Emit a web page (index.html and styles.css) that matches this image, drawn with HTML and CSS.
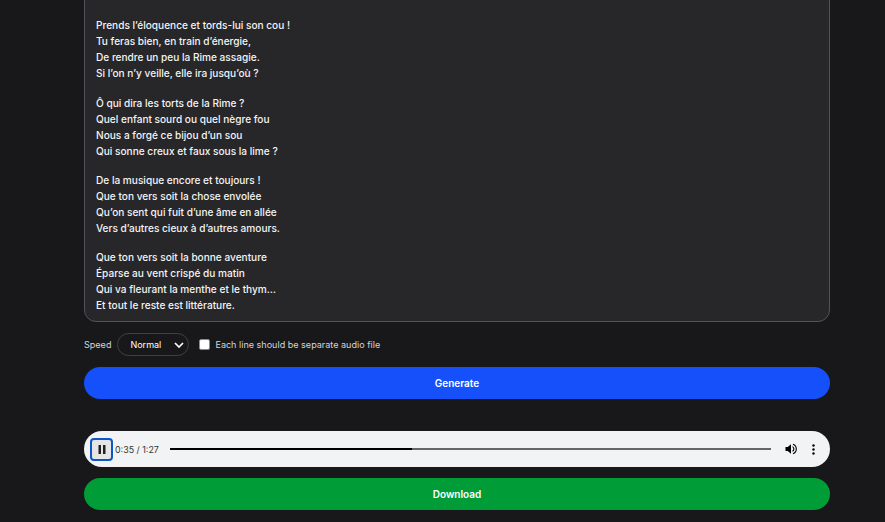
FILE: index.html
```
<!DOCTYPE html>
<html lang="fr">
<head>
<meta charset="utf-8">
<title>Text to speech</title>
<link rel="stylesheet" href="styles.css">
</head>
<body>
<main class="page">
  <div class="poem">
    <p>Fuis du plus loin la Pointe assassine,<br>L’Esprit cruel et le Rire impur,<br>Qui font pleurer les yeux de l’Azur,<br>Et tout cet ail de basse cuisine !</p>
    <p>Prends l’éloquence et tords-lui son cou !<br>Tu feras bien, en train d’énergie,<br>De rendre un peu la Rime assagie.<br>Si l’on n’y veille, elle ira jusqu’où ?</p>
    <p>Ô qui dira les torts de la Rime ?<br>Quel enfant sourd ou quel nègre fou<br>Nous a forgé ce bijou d’un sou<br>Qui sonne creux et faux sous la lime ?</p>
    <p>De la musique encore et toujours !<br>Que ton vers soit la chose envolée<br>Qu’on sent qui fuit d’une âme en allée<br>Vers d’autres cieux à d’autres amours.</p>
    <p>Que ton vers soit la bonne aventure<br>Éparse au vent crispé du matin<br>Qui va fleurant la menthe et le thym…<br>Et tout le reste est littérature.</p>
  </div>
  <div class="options">
    <span class="label">Speed</span>
    <div class="select"><span>Normal</span>
      <svg class="chevron" viewBox="0 0 10 6" width="10" height="6"><path d="M1 1l4 4 4-4" fill="none" stroke="#fff" stroke-width="1.7"/></svg>
    </div>
    <span class="check"></span>
    <span class="label">Each line should be separate audio file</span>
  </div>
  <button class="btn generate">Generate</button>
  <div class="player">
    <span class="pause"><svg viewBox="0 0 8 9" width="8" height="9"><path d="M0.5 0h2.5v9H0.5zM5 0h2.5v9H5z" fill="#222"/></svg></span>
    <span class="time">0:35 / 1:27</span>
    <div class="track"><div class="played"></div></div>
    <svg class="vol" viewBox="0 0 12 12" width="12" height="12"><path d="M0.5 4h2.3L6 1.2v9.6L2.8 8H0.5z" fill="#000"/><path d="M7.5 3.6a2.8 2.8 0 0 1 0 4.8M8 1.3a5 5 0 0 1 0 9.4" fill="none" stroke="#000" stroke-width="1.1"/></svg>
    <svg class="more" viewBox="0 0 3 11" width="3" height="11"><circle cx="1.5" cy="1.5" r="1.2"/><circle cx="1.5" cy="5.5" r="1.2"/><circle cx="1.5" cy="9.5" r="1.2"/></svg>
  </div>
  <button class="btn download">Download</button>
</main>
</body>
</html>
```
FILE: styles.css
```
* { box-sizing: border-box; }
html, body { margin: 0; height: 100%; overflow: hidden; background: #18181b; }
body { font-family: Inter, "Liberation Sans", sans-serif; color: #fff; }
.page {
  height: 522px;
  display: flex;
  flex-direction: column;
  justify-content: flex-end;
  padding: 0 55px 12px 84px;
}
.poem {
  flex: none;
  background: #27272a;
  border: 1px solid #52525b;
  border-radius: 12px;
  padding: 0 11px 1px 11px;
  font-size: 10.1px;
  font-weight: 500;
  line-height: 16px;
  color: #f4f4f5;
}
.poem p { margin: 0 0 13.33px; }
.poem p:last-child { margin-bottom: 6.6px; }
.options {
  display: flex;
  align-items: center;
  margin-top: 11px;
  height: 24px;
}
.label { font-size: 9.05px; color: #d4d4d8; }
.select {
  margin-left: 6px;
  width: 72px;
  height: 23px;
  border: 1px solid #3f3f46;
  border-radius: 12px;
  display: flex;
  align-items: center;
  justify-content: space-between;
  padding: 0 4px 0 12px;
  font-size: 9px;
  font-weight: 400;
}
.check {
  width: 11px;
  height: 11px;
  margin: 0 5px 0 10px;
  background: #fff;
  border-radius: 2px;
  border: 1px solid #8a8a8a;
}
.btn {
  display: block;
  width: 100%;
  height: 32px;
  border: 0;
  border-radius: 16px;
  color: #fff;
  font: 600 10px Inter, "Liberation Sans", sans-serif;
  flex: none;
}
.generate { background: #1550fb; margin-top: 11px; }
.player {
  flex: none;
  display: flex;
  align-items: center;
  height: 36px;
  margin-top: 32px;
  background: #f1f3f4;
  border-radius: 18px;
  padding: 0 15px 0 6px;
  color: #222;
}
.pause {
  width: 23px;
  height: 23px;
  border: 2px solid #0b57c9;
  border-radius: 4px;
  background: #e6e6e6;
  display: flex;
  align-items: center;
  justify-content: center;
}
.time { font-size: 8.9px; margin-left: 2px; color: #333; width: 55px; white-space: nowrap; }
.track { flex: 1; height: 2px; background: #666; }
.played { width: 40.2%; height: 100%; background: #000; }
.vol { margin-left: 14px; }
.more { margin-left: 15px; }
.download { background: #009c37; margin-top: 11px; }
```
